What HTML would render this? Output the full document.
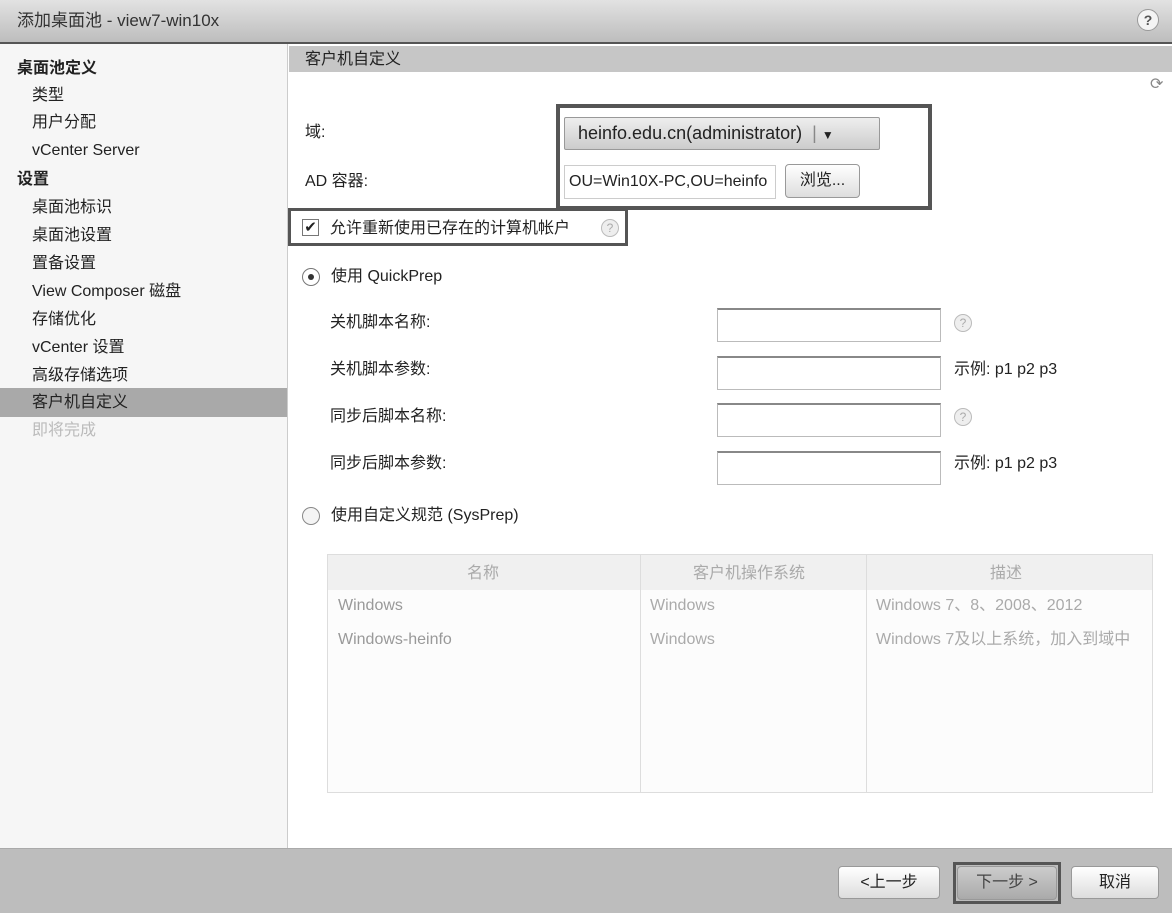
<!DOCTYPE html>
<html><head><meta charset="utf-8"><style>
*{margin:0;padding:0;box-sizing:border-box}
body{width:1172px;height:913px;position:relative;overflow:hidden;background:#fff;font-family:"Liberation Sans","Noto Sans CJK SC",sans-serif;font-size:16px;line-height:34px;color:#222}
.a{position:absolute;white-space:nowrap}
.title{left:0;top:0;width:1172px;height:44px;background:linear-gradient(#e2e2e2,#bdbdbd);border-bottom:2px solid #555}
.side{left:0;top:44px;width:288px;height:804px;background:#f6f6f6;border-right:1px solid #ccc}
.si{left:32px;font-size:16px}
.b{left:17px;font-weight:bold}
.inp{background:#fff;border:1px solid #bbb;border-top:2px solid #888}
.q{width:18px;height:18px;border-radius:50%;border:1px solid #bbb;background:#eee;color:#aaa;font-size:12px;text-align:center;line-height:16px}
.btn{border:1px solid #999;border-radius:4px;background:linear-gradient(#fff,#ddd);text-align:center}
.grid{color:#aaa}
</style></head><body>
<div class="a title"></div>
<div class="a" style="left:17px;top:4px;font-size:17px;color:#333">添加桌面池 - view7-win10x</div>
<div class="a q" style="left:1137px;top:9px;width:22px;height:22px;line-height:20px;color:#555;background:#f4f4f4;border-color:#999;font-weight:bold;font-size:14px">?</div>
<div class="a side"></div>
<div class="a" style="left:0;top:388px;width:287px;height:29px;background:#a9a9a9"></div>
<div class="a b" style="top:52px">桌面池定义</div>
<div class="a si" style="top:79px">类型</div>
<div class="a si" style="top:106px">用户分配</div>
<div class="a si" style="top:134px">vCenter Server</div>
<div class="a b" style="top:163px">设置</div>
<div class="a si" style="top:191px">桌面池标识</div>
<div class="a si" style="top:219px">桌面池设置</div>
<div class="a si" style="top:247px">置备设置</div>
<div class="a si" style="top:275px">View Composer 磁盘</div>
<div class="a si" style="top:303px">存储优化</div>
<div class="a si" style="top:331px">vCenter 设置</div>
<div class="a si" style="top:359px">高级存储选项</div>
<div class="a si" style="top:386px">客户机自定义</div>
<div class="a si" style="top:414px;color:#bbb">即将完成</div>
<div class="a" style="left:289px;top:46px;width:883px;height:26px;background:#c6c6c6"></div>
<div class="a" style="left:305px;top:43px">客户机自定义</div>
<div class="a" style="left:1150px;top:68px;color:#888;font-size:16px">⟳</div>
<div class="a" style="left:305px;top:116px">域:</div>
<div class="a" style="left:305px;top:165px">AD 容器:</div>
<div class="a" style="left:556px;top:104px;width:376px;height:106px;border:4px solid #555"></div>
<div class="a btn" style="left:564px;top:117px;width:316px;height:33px;border-radius:2px;background:linear-gradient(#eee,#ccc);font-size:18px;line-height:31px;text-align:left;padding-left:13px">heinfo.edu.cn(administrator) <span style="color:#888">&nbsp;|</span> <span style="font-size:12px">▼</span></div>
<div class="a inp" style="left:564px;top:165px;width:212px;height:34px;border:1px solid #ccc;font-size:16px;line-height:32px;padding-left:4px">OU=Win10X-PC,OU=heinfo</div>
<div class="a btn" style="left:785px;top:164px;width:75px;height:34px;line-height:32px">浏览...</div>
<div class="a" style="left:288px;top:208px;width:340px;height:38px;border:3px solid #555"></div>
<div class="a" style="left:302px;top:219px;width:17px;height:17px;border:1px solid #777;background:#fff;font-size:15px;line-height:15px;text-align:center">✔</div>
<div class="a" style="left:330px;top:212px">允许重新使用已存在的计算机帐户</div>
<div class="a q" style="left:601px;top:219px">?</div>
<div class="a" style="left:302px;top:268px;width:18px;height:18px;border-radius:50%;border:1px solid #777"><div style="width:6px;height:6px;background:#333;border-radius:50%;margin:5px"></div></div>
<div class="a" style="left:331px;top:260px">使用 QuickPrep</div>
<div class="a" style="left:330px;top:306px">关机脚本名称:</div>
<div class="a" style="left:330px;top:353px">关机脚本参数:</div>
<div class="a" style="left:330px;top:400px">同步后脚本名称:</div>
<div class="a" style="left:330px;top:447px">同步后脚本参数:</div>
<div class="a inp" style="left:717px;top:308px;width:224px;height:34px"></div>
<div class="a inp" style="left:717px;top:356px;width:224px;height:34px"></div>
<div class="a inp" style="left:717px;top:403px;width:224px;height:34px"></div>
<div class="a inp" style="left:717px;top:451px;width:224px;height:34px"></div>
<div class="a q" style="left:954px;top:314px">?</div>
<div class="a q" style="left:954px;top:408px">?</div>
<div class="a" style="left:954px;top:353px">示例: p1 p2 p3</div>
<div class="a" style="left:954px;top:447px">示例: p1 p2 p3</div>
<div class="a" style="left:302px;top:507px;width:18px;height:18px;border-radius:50%;border:1px solid #888;background:#f4f4f4"></div>
<div class="a" style="left:331px;top:499px">使用自定义规范 (SysPrep)</div>
<div class="a" style="left:327px;top:554px;width:826px;height:239px;border:1px solid #ddd;background:#fcfcfc"></div>
<div class="a" style="left:328px;top:555px;width:824px;height:35px;background:#f0f0f0"></div>
<div class="a" style="left:640px;top:555px;width:1px;height:237px;background:#ddd"></div>
<div class="a" style="left:866px;top:555px;width:1px;height:237px;background:#ddd"></div>
<div class="a grid" style="left:467px;top:557px">名称</div>
<div class="a grid" style="left:693px;top:557px">客户机操作系统</div>
<div class="a grid" style="left:990px;top:557px">描述</div>
<div class="a" style="left:338px;top:589px;color:#999">Windows</div>
<div class="a" style="left:338px;top:623px;color:#999">Windows-heinfo</div>
<div class="a grid" style="left:650px;top:589px">Windows</div>
<div class="a grid" style="left:650px;top:623px">Windows</div>
<div class="a grid" style="left:876px;top:589px">Windows 7、8、2008、2012</div>
<div class="a grid" style="left:876px;top:623px;width:276px;overflow:hidden">Windows 7及以上系统，加入到域中</div>
<div class="a" style="left:0;top:848px;width:1172px;height:65px;background:#bdbdbd;border-top:1px solid #aaa"></div>
<div class="a btn" style="left:838px;top:866px;width:102px;height:33px;line-height:31px">&lt;上一步</div>
<div class="a" style="left:953px;top:862px;width:108px;height:42px;border:3px solid #555"></div>
<div class="a btn" style="left:957px;top:866px;width:100px;height:34px;line-height:32px;background:linear-gradient(#ccc,#aaa);color:#444">下一步 &gt;</div>
<div class="a btn" style="left:1071px;top:866px;width:88px;height:33px;line-height:31px">取消</div>
</body></html>
